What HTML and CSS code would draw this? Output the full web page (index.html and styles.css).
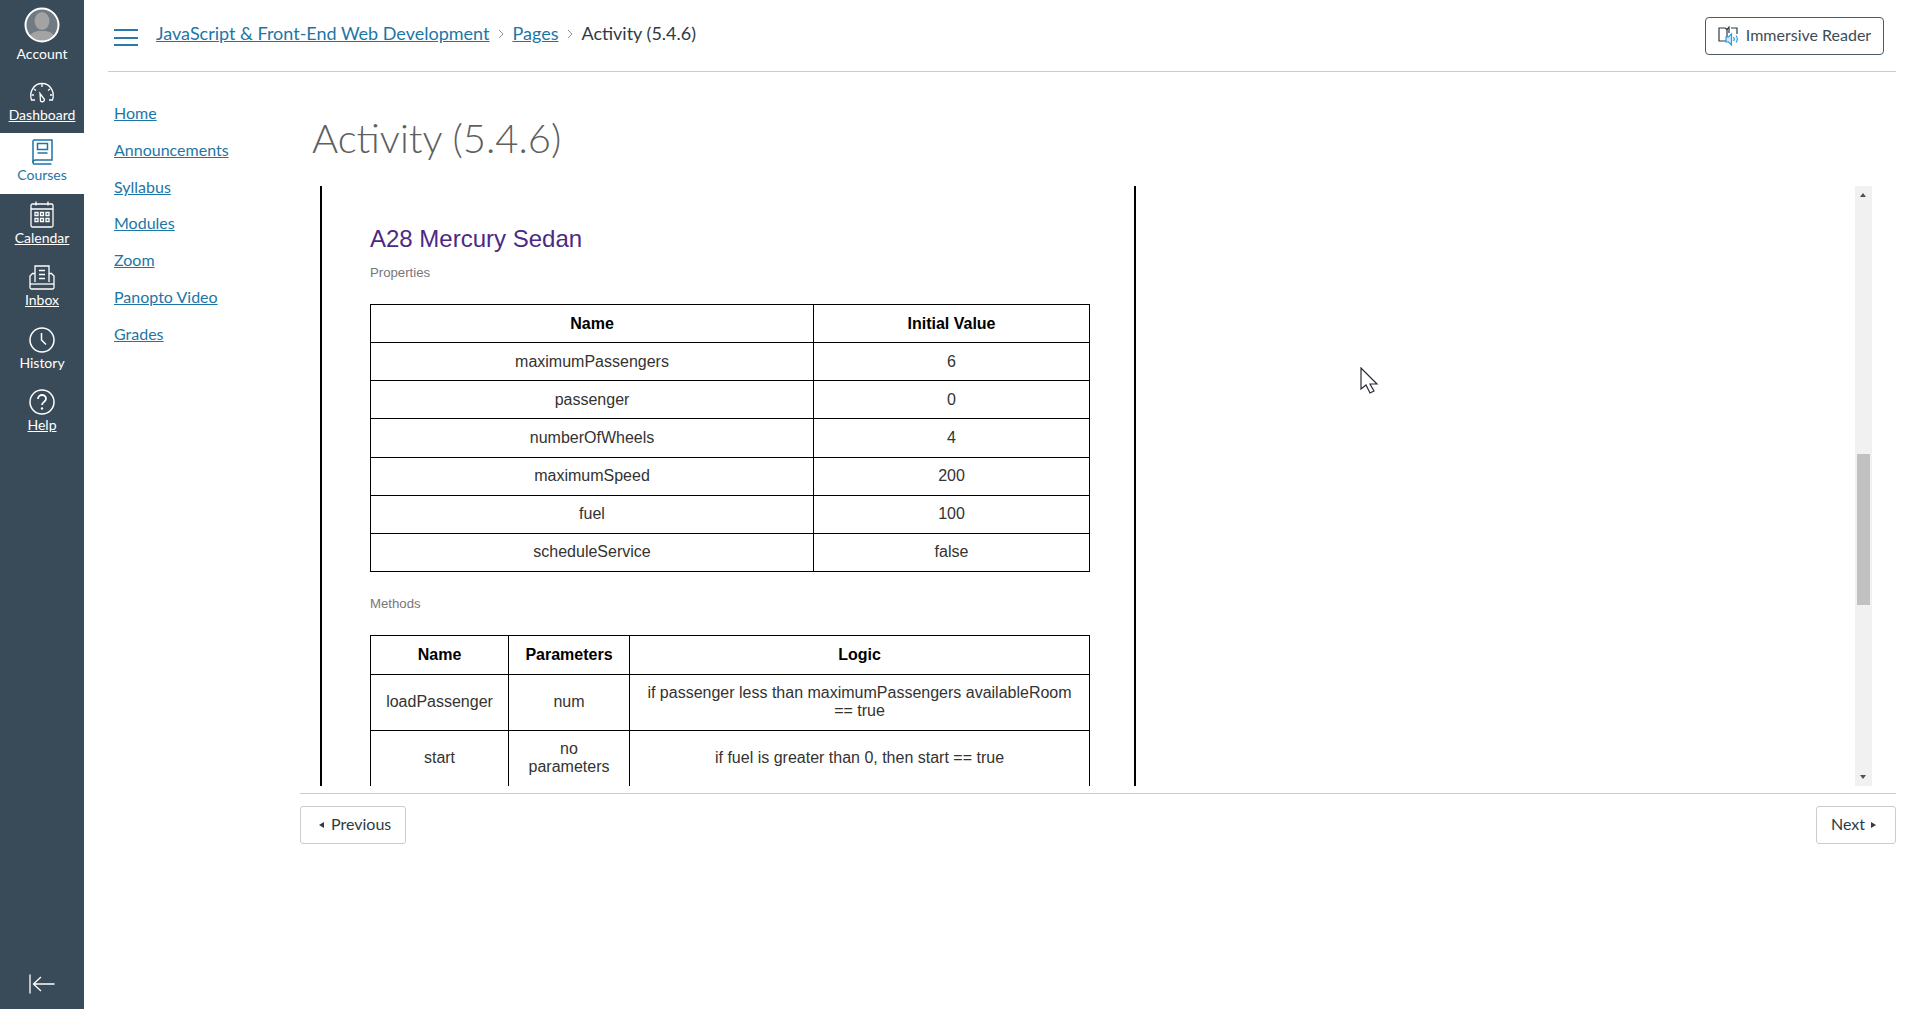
FILE: index.html
```html
<!DOCTYPE html>
<html lang="en">
<head>
  <meta charset="UTF-8" />
  <title>Activity (5.4.6)</title>
  <link rel="stylesheet" href="styles.css">
</head>
<body>

  <nav class="global-nav">
    <a class="nav-item nav-account">
      <svg class="avatar" width="36" height="36" viewBox="0 0 36 36">
        <defs><clipPath id="avatarClip"><circle cx="18" cy="18" r="16.5"/></clipPath></defs>
        <circle cx="18" cy="18" r="16.5" fill="#6f7a82"/>
        <g clip-path="url(#avatarClip)" fill="#a3a3a3">
          <ellipse cx="18" cy="14" rx="7.5" ry="9"/>
          <path d="M3 36c0-8 6-11 11-12h8c5 1 11 4 11 12z"/>
        </g>
        <circle cx="18" cy="18" r="16.5" fill="none" stroke="#fff" stroke-width="2"/>
      </svg>
      <span class="nav-label nav-plain">Account</span>
    </a>
    <a class="nav-item">
      <svg width="28" height="24" viewBox="0 0 28 24" fill="none" stroke="#fff" stroke-width="1.3">
        <path d="M7 19H3.500C1 12 5 2.500 14 2.500S27 12 24.500 19H21"/>
        <path d="M12 12.500l4.500 6a2.300 2.300 0 0 1-4 1.500z"/>
        <path d="M14 3v3M6 8l2 1.500M22 8l-2 1.500M3.500 14h2.500M22 14h2.500"/>
      </svg>
      <span class="nav-label">Dashboard</span>
    </a>
    <a class="nav-item active">
      <svg width="22" height="26" viewBox="0 0 22 26" fill="none" stroke="#1d76a6" stroke-width="1.500">
        <path d="M3 1h18v20H4.500A2.500 2.500 0 0 0 2 23.500 1.500 1.500 0 0 0 4 25h16.500"/>
        <path d="M2 23.500V2.500A1.500 1.500 0 0 1 3 1"/>
        <path d="M6.500 4.500h10v6h-10zM6.500 14h10"/>
      </svg>
      <span class="nav-label">Courses</span>
    </a>
    <a class="nav-item">
      <svg width="24" height="27" viewBox="0 0 24 27" fill="none" stroke="#fff" stroke-width="1.300">
        <rect x="1" y="3" width="22" height="23" rx="1.500"/>
        <path d="M1 8h22M6 0.500v4M18 0.500v4" />
        <path d="M5 11.500h3v3H5zM10.500 11.500h3v3h-3zM16 11.500h3v3h-3zM5 17.500h3v3H5zM10.500 17.500h3v3h-3zM16 17.500h3v3h-3z"/>
      </svg>
      <span class="nav-label">Calendar</span>
    </a>
    <a class="nav-item">
      <svg width="26" height="25" viewBox="0 0 26 25" fill="none" stroke="#fff" stroke-width="1.300">
        <path d="M6 17V1h14v16"/>
        <path d="M10 5.500h6M10 9.500h6M10 13.500h6" stroke-width="1.600"/>
        <path d="M6 8.500H3.500L1 11v11.500a1.500 1.500 0 0 0 1.500 1.500h21a1.500 1.500 0 0 0 1.500-1.500V11l-2.500-2.500H20"/>
        <path d="M1 19h24"/>
      </svg>
      <span class="nav-label">Inbox</span>
    </a>
    <a class="nav-item">
      <svg width="26" height="26" viewBox="0 0 26 26" fill="none" stroke="#fff" stroke-width="1.500">
        <circle cx="13" cy="13" r="12"/>
        <path d="M12.500 6v7l4.500 4.500"/>
      </svg>
      <span class="nav-label nav-plain">History</span>
    </a>
    <a class="nav-item">
      <svg width="26" height="26" viewBox="0 0 26 26" fill="none" stroke="#fff" stroke-width="1.500">
        <circle cx="13" cy="13" r="12"/>
        <path d="M9 10c0-2.500 2-4 4-4s4 1.500 4 3.800c0 3-4 3.200-4 6.200" stroke-width="1.800"/>
        <circle cx="13" cy="19.500" r="1.200" fill="#fff" stroke="none"/>
      </svg>
      <span class="nav-label">Help</span>
    </a>
    <a class="nav-collapse">
      <svg width="26" height="20" viewBox="0 0 26 20" fill="none" stroke="#fff" stroke-width="1.300">
        <path d="M1 0.500v19M25.500 10H4.500M12 3l-7.500 7 7.500 7"/>
      </svg>
    </a>
  </nav>

  <div class="page">
    <header class="top-bar">
      <button class="menu-btn" aria-label="Menu"><span></span><span></span><span></span></button>
      <div class="breadcrumbs">
        <a href="#">JavaScript &amp; Front-End Web Development</a>
        <svg class="crumb-sep" width="6" height="10" viewBox="0 0 6 10"><path d="M1 1l4 4-4 4" fill="none" stroke="#8b969e"/></svg>
        <a href="#">Pages</a>
        <svg class="crumb-sep" width="6" height="10" viewBox="0 0 6 10"><path d="M1 1l4 4-4 4" fill="none" stroke="#8b969e"/></svg>
        <span class="crumb-current">Activity (5.4.6)</span>
      </div>
      <button class="reader-btn">
        <svg width="22" height="20" viewBox="0 0 22 20" fill="none">
          <path d="M9 15H1V2h6l2 1.500L11 1v6M13 2h6v6" stroke="#2d3b45" stroke-width="1.200"/>
          <path d="M9 2.500V12" stroke="#2d3b45" stroke-width="1.200"/>
          <path d="M8 11h2.500l3-3v11l-3-3H8z" stroke="#2b9be0" stroke-width="1.200" fill="#cfe8f8"/>
          <path d="M15.500 11c.8 1 .8 3 0 4M18 9.500c1.500 2 1.500 5 0 7" stroke="#2b9be0" stroke-width="1.200"/>
        </svg>
        Immersive Reader
      </button>
    </header>

    <div class="columns">
      <ul class="course-nav">
        <li><a href="#">Home</a></li>
        <li><a href="#">Announcements</a></li>
        <li><a href="#">Syllabus</a></li>
        <li><a href="#">Modules</a></li>
        <li><a href="#">Zoom</a></li>
        <li><a href="#">Panopto Video</a></li>
        <li><a href="#">Grades</a></li>
      </ul>

      <main class="content">
        <h1 class="page-title">Activity (5.4.6)</h1>

        <div class="frame">
          <div class="frame-inner">
            <div class="sheet">
              <h2>A28 Mercury Sedan</h2>
              <p class="caption">Properties</p>
              <table class="props">
                <tr><th>Name</th><th>Initial Value</th></tr>
                <tr><td>maximumPassengers</td><td>6</td></tr>
                <tr><td>passenger</td><td>0</td></tr>
                <tr><td>numberOfWheels</td><td>4</td></tr>
                <tr><td>maximumSpeed</td><td>200</td></tr>
                <tr><td>fuel</td><td>100</td></tr>
                <tr><td>scheduleService</td><td>false</td></tr>
              </table>
              <p class="caption caption-methods">Methods</p>
              <table class="methods">
                <tr><th>Name</th><th>Parameters</th><th>Logic</th></tr>
                <tr><td>loadPassenger</td><td>num</td><td>if passenger less than maximumPassengers availableRoom == true</td></tr>
                <tr><td>start</td><td>no parameters</td><td>if fuel is greater than 0, then start == true</td></tr>
              </table>
            </div>
          </div>
          <div class="scrollbar">
            <span class="arrow-up"></span>
            <span class="thumb"></span>
            <span class="arrow-down"></span>
          </div>
        </div>

        <div class="pager">
          <a class="pager-btn pager-prev"><span class="tri-left"></span>Previous</a>
          <a class="pager-btn pager-next">Next<span class="tri-right"></span></a>
        </div>
      </main>
    </div>
  </div>

  <svg class="mouse-cursor" width="20" height="28" viewBox="0 0 20 28">
    <path d="M1 1v21l5-4 4 8 4-2-4-7h7z" fill="#fff" stroke="#2a2a35" stroke-width="1.200"/>
  </svg>

</body>
</html>
```

FILE: styles.css
```css
* {
  box-sizing: border-box;
}

html, body {
  height: 100%;
}

body {
  margin: 0;
  display: flex;
  font-family: Lato, "Open Sans", sans-serif;
  font-size: 16px;
  color: #2d3b45;
  background: #fff;
  overflow: hidden;
}

a {
  color: #1d76a6;
}

/* left global nav */
.global-nav {
  width: 84px;
  flex-shrink: 0;
  display: flex;
  flex-direction: column;
  align-items: stretch;
  background: #394b58;
  color: #fff;
}

.nav-item {
  height: 62.400px;
  display: flex;
  flex-direction: column;
  align-items: center;
  justify-content: flex-end;
  gap: 1px;
  padding-bottom: 9px;
}

.nav-account {
  height: 71px;
  padding-bottom: 8px;
  gap: 2px;
}

.nav-label {
  font-size: 14px;
  line-height: 18px;
  color: #fff;
  text-decoration: underline;
}

.nav-plain {
  text-decoration: none;
}

.nav-item.active {
  height: 60.200px;
  padding-bottom: 10px;
  background: #fff;
}

.nav-item.active .nav-label {
  color: #1d76a6;
  text-decoration: none;
}

.nav-collapse {
  margin-top: auto;
  height: 50px;
  display: flex;
  justify-content: center;
  padding-top: 15px;
}

/* page */
.page {
  flex: 1;
  min-width: 0;
  display: flex;
  flex-direction: column;
  padding: 0 24px;
}

.top-bar {
  height: 72px;
  flex-shrink: 0;
  display: flex;
  align-items: flex-start;
  border-bottom: 1px solid #c7cdd1;
}

.menu-btn {
  width: 24px;
  height: 17px;
  margin: 29px 18px 0 6px;
  padding: 0;
  border: none;
  background: none;
  display: flex;
  flex-direction: column;
  justify-content: space-between;
}

.menu-btn span {
  display: block;
  height: 2px;
  background: #2b79a8;
}

.breadcrumbs {
  flex: 1;
  display: flex;
  align-items: center;
  gap: 8.500px;
  padding-top: 22px;
  line-height: 22px;
  font-size: 18px;
}

.crumb-sep {
  margin: 2px 0 0 0;
}

.crumb-current {
  color: #2d3b45;
}

.reader-btn {
  width: 179px;
  height: 38px;
  margin: 17px 12px 0 0;
  padding: 0 0 4px;
  display: flex;
  align-items: center;
  justify-content: center;
  gap: 6px;
  font-family: inherit;
  font-size: 16px;
  color: #3d4c57;
  background: #fff;
  border: 1px solid #4a5b68;
  border-radius: 4px;
}

.reader-btn svg {
  margin-top: 3px;
}

.columns {
  flex: 1;
  display: flex;
  min-height: 0;
}

.course-nav {
  width: 192px;
  flex-shrink: 0;
  list-style: none;
  margin: 0;
  padding: 23px 0 0 6px;
  font-size: 16px;
  line-height: 36.800px;
}

.content {
  flex: 1;
  min-width: 0;
}

.page-title {
  height: 114px;
  margin: 0;
  padding: 41px 0 0 12px;
  font-size: 40px;
  font-weight: 300;
  line-height: 50px;
  color: #5f5f5f;
}

/* embedded activity page */
.frame {
  display: flex;
  width: 1572px;
  height: 600px;
  overflow: hidden;
}

.frame-inner {
  flex: 1;
  min-width: 0;
  padding-left: 20px;
}

.sheet {
  width: 816px;
  min-height: 100%;
  padding: 0 48px;
  border-left: 2px solid #000;
  border-right: 2px solid #000;
  font-family: "Liberation Sans", Arial, sans-serif;
}

.sheet h2 {
  margin: 0;
  padding-top: 38px;
  font-size: 24px;
  font-weight: 400;
  line-height: 30px;
  color: #4b2a85;
}

.caption {
  margin: 0;
  padding-top: 10px;
  height: 50px;
  font-size: 13.200px;
  line-height: 18px;
  color: #777;
}

.caption-methods {
  padding-top: 23px;
  height: 63px;
}

table {
  width: 720px;
  table-layout: fixed;
  border-collapse: collapse;
  font-size: 16px;
  line-height: 18px;
  color: #333;
}

th, td {
  border: 1px solid #000;
  padding: 9.570px 12px;
  text-align: center;
}

th {
  color: #000;
  font-weight: 700;
}

.props th:first-child {
  width: 443px;
}

.methods th {
  padding-top: 10px;
  padding-bottom: 10px;
}

.methods td {
  padding-top: 9.500px;
  padding-bottom: 9.500px;
}

.methods th:nth-child(1) {
  width: 138px;
}

.methods th:nth-child(2) {
  width: 121px;
}

.scrollbar {
  width: 17px;
  flex-shrink: 0;
  position: relative;
  background: #f1f1f1;
}

.thumb {
  position: absolute;
  top: 268px;
  left: 2px;
  right: 2px;
  height: 151px;
  background: #c1c1c1;
}

.arrow-up, .arrow-down {
  position: absolute;
  left: 5px;
  width: 0;
  height: 0;
  border-left: 3.500px solid transparent;
  border-right: 3.500px solid transparent;
}

.arrow-up {
  top: 7px;
  border-bottom: 4px solid #505050;
}

.arrow-down {
  bottom: 7px;
  border-top: 4px solid #505050;
}

/* previous / next */
.pager {
  display: flex;
  justify-content: space-between;
  margin-top: 7px;
  padding-top: 12px;
  border-top: 1px solid #c7cdd1;
}

.pager-btn {
  height: 38px;
  display: flex;
  align-items: center;
  padding-bottom: 4px;
  font-size: 16px;
  color: #2d3b45;
  border: 1px solid #c7cdd1;
  border-radius: 3px;
}

.pager-prev {
  gap: 7px;
  padding-left: 18px;
  padding-right: 14px;
}

.pager-next {
  gap: 6px;
  padding-left: 14px;
  padding-right: 19px;
}

.tri-left, .tri-right {
  width: 0;
  height: 0;
  margin-top: 3px;
  border-top: 3.500px solid transparent;
  border-bottom: 3.500px solid transparent;
}

.tri-left {
  border-right: 5px solid #2d3b45;
}

.tri-right {
  border-left: 5px solid #2d3b45;
}

.mouse-cursor {
  position: absolute;
  left: 1360px;
  top: 367px;
}
```
